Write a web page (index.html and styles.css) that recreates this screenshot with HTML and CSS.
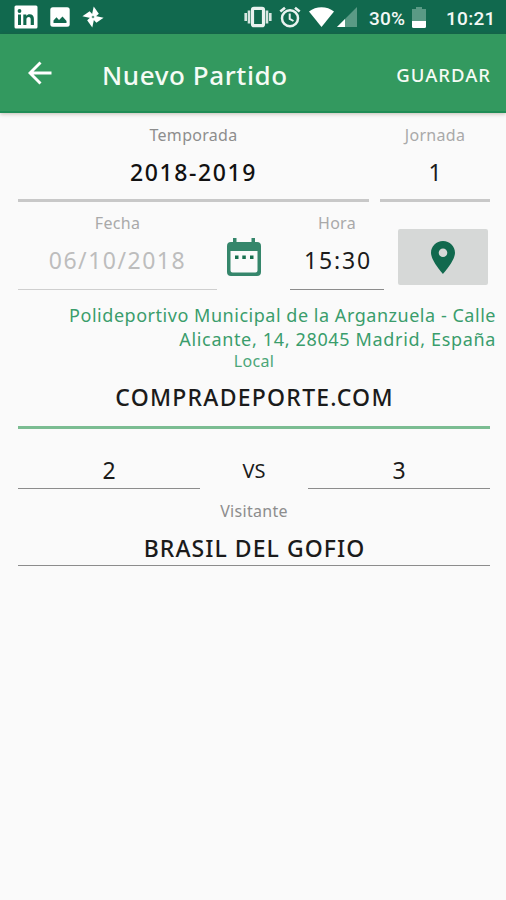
FILE: index.html
```html
<!DOCTYPE html>
<html lang="es">
<head>
  <meta charset="UTF-8">
  <meta name="viewport" content="width=device-width, initial-scale=1.0">
  <title>Nuevo Partido</title>
  <link rel="stylesheet" href="styles.css">
</head>
<body>
  <!-- Barra de estado -->
  <div class="status-bar">
    <svg class="ic-linkedin" width="24" height="24" viewBox="0 0 24 24">
      <rect x="0.5" y="0.5" width="23" height="23" rx="1.5" fill="#fff"/>
      <path d="M4 9.5h3V20H4zM9.300 9.500h3v1.400c.8-1.200 1.900-1.700 3.300-1.700 2.900 0 4.300 1.700 4.300 4.700V20h-3.200v-5.500c0-1.600-.6-2.500-1.900-2.500-1.500 0-2.400 1-2.400 2.700V20H9.300z" fill="#11694e"/>
      <circle cx="5.500" cy="6" r="1.900" fill="#11694e"/>
    </svg>
    <svg class="ic-image" width="20" height="20" viewBox="0 0 20 20">
      <rect x="0.300" y="0.300" width="19.400" height="19.400" rx="2.500" fill="#fff"/>
      <path d="M3.500 16v-2.500l3-3.200 2.500 2.700 3.500-3.500 4 4.500v2z" fill="#11694e"/>
    </svg>
    <svg class="ic-pinwheel" width="22" height="22" viewBox="0 0 22 22">
      <g transform="rotate(12 11 11)" fill="#fff">
        <path id="blade" d="M9.500 11V.5L16 6.500l-3.500 5z"/>
        <use href="#blade" transform="rotate(90 11 11)"/>
        <use href="#blade" transform="rotate(180 11 11)"/>
        <use href="#blade" transform="rotate(270 11 11)"/>
      </g>
      <circle cx="11" cy="11" r="1.300" fill="#5f9b88"/>
    </svg>
    <svg class="ic-vibrate" width="28" height="22" viewBox="0 0 28 22">
      <path d="M1.700 7v8M5 4.500v13M26.300 7v8M23 4.500v13" stroke="#d7e6e1" stroke-width="2.600" fill="none"/>
      <rect x="8.500" y="2.300" width="11" height="17.400" rx="1.500" stroke="#e9f2ef" stroke-width="3.200" fill="none"/>
    </svg>
    <svg class="ic-alarm" width="22" height="22" viewBox="0 0 22 22" fill="none" stroke="#e9f2ef">
      <circle cx="11" cy="12.200" r="8" stroke-width="2.500"/>
      <path d="M1.300 5.600L6 1.700M20.700 5.600L16 1.700" stroke-width="2.600"/>
      <path d="M10.700 7.500v5.300l3.800 2.200" stroke-width="2"/>
    </svg>
    <svg class="ic-wifi" width="25" height="20" viewBox="0 0 25 20">
      <path d="M0 4.500C7-1.300 18-1.300 25 4.500L12.500 20z" fill="#fff"/>
    </svg>
    <svg class="ic-signal" width="20" height="20" viewBox="0 0 20 20">
      <path d="M0 20L20 0v20z" fill="#5a9a85"/>
      <path d="M0 20l8-8v8z" fill="#fff"/>
    </svg>
    <span class="battery-text">30%</span>
    <svg class="ic-battery" width="14" height="21" viewBox="0 0 14 21">
      <path d="M4 0h6v2h4v12H0V2h4z" fill="#5a9a85"/>
      <path d="M0 14h14v5.500q0 1.500-1.500 1.500h-11Q0 21 0 19.500z" fill="#fff"/>
    </svg>
    <span class="clock">10:21</span>
  </div>

  <!-- Cabecera -->
  <header class="app-bar">
    <svg class="back" width="24" height="24" viewBox="0 0 24 24">
      <path d="M23.500 12H2.500M12.500 1.500L2 12l10.500 10.500" fill="none" stroke="#fff" stroke-width="2.900"/>
    </svg>
    <h1>Nuevo Partido</h1>
    <button class="save">GUARDAR</button>
  </header>

  <!-- Formulario -->
  <main class="form">
    <div class="row">
      <div class="field season thick">
        <label>Temporada</label>
        <div class="value medium">2018-2019</div>
      </div>
      <div class="field round thick">
        <label class="light">Jornada</label>
        <div class="value">1</div>
      </div>
    </div>

    <div class="row">
      <div class="field date">
        <label class="light">Fecha</label>
        <div class="value">06/10/2018</div>
      </div>
      <svg class="calendar" width="34" height="38" viewBox="0 0 34 38">
        <path d="M4 4h26q4 0 4 4v26q0 4-4 4H4q-4 0-4-4V8q0-4 4-4zM3.500 13v19.500q0 2 2 2h23q2 0 2-2V13z" fill="#35866b" fill-rule="evenodd"/>
        <path d="M6 0h3.500v5H6zM24.500 0H28v5h-3.500z" fill="#35866b"/>
        <path d="M8 17.500h3.500V21H8zM15.300 17.500h3.500V21h-3.500zM23 17.500h3.500V21H23z" fill="#16704f"/>
      </svg>
      <div class="field time">
        <label class="light">Hora</label>
        <div class="value">15:30</div>
      </div>
      <button class="map-button">
        <svg width="24" height="33" viewBox="0 0 24 33">
          <path d="M12 0C5.200 0 0 5.200 0 11.700 0 20 12 33 12 33s12-13 12-21.300C24 5.200 18.800 0 12 0zm0 7.400a4.300 4.300 0 1 1 0 8.600 4.300 4.300 0 0 1 0-8.600z" fill="#11694e"/>
        </svg>
      </button>
    </div>

    <p class="address">Polideportivo Municipal de la Arganzuela - Calle<br><span class="city">Alicante, 14, 28045 Madrid, España</span></p>

    <div class="field local">
      <label>Local</label>
      <div class="value medium">COMPRADEPORTE.COM</div>
    </div>

    <div class="score">
      <div class="goals">2</div>
      <span class="vs">VS</span>
      <div class="goals">3</div>
    </div>

    <div class="field visitor">
      <label>Visitante</label>
      <div class="value medium">BRASIL DEL GOFIO</div>
    </div>
  </main>
</body>
</html>
```

FILE: styles.css
```css
* {
  box-sizing: border-box;
}
body {
  margin: 0;
  min-height: 900px;
  background: #fafafa;
  color: #1b1b1b;
  font-family: "Noto Sans", "Open Sans", sans-serif;
}
svg {
  display: block;
  flex: none;
}
.status-bar {
  display: flex;
  align-items: center;
  height: 34px;
  padding-left: 14px;
  background: #11694e;
  color: #f3f8f6;
  font-family: Roboto, sans-serif;
  font-size: 19px;
  font-weight: 500;
}
.ic-image {
  margin-left: 12px;
}
.ic-pinwheel {
  margin-left: 12px;
}
.ic-vibrate {
  margin-left: 140px;
}
.ic-alarm {
  margin-left: 7px;
}
.ic-wifi {
  margin-left: 8px;
}
.ic-signal {
  margin-left: 3px;
}
.battery-text {
  width: 38px;
  margin-left: 12px;
  margin-top: 2px;
  letter-spacing: 0.2px;
}
.ic-battery {
  margin-left: 5px;
}
.clock {
  margin-left: 20px;
  margin-top: 2px;
  letter-spacing: 0.3px;
}
.app-bar {
  display: flex;
  align-items: center;
  height: 79px;
  padding: 0 15px 0 28px;
  background: #33995f;
  border-bottom: 2px solid #1f8d56;
  box-shadow: 0 1px 4px rgba(70, 50, 20, 0.3);
  color: #f5fbf5;
}
.app-bar h1 {
  margin: 4px 0 0 50px;
  font-size: 26px;
  font-weight: 500;
  letter-spacing: 0.6px;
}
.save {
  margin-left: auto;
  padding: 3px 0 0;
  border: none;
  background: none;
  color: inherit;
  font: 500 18.5px "Noto Sans", sans-serif;
  letter-spacing: 1px;
}
.form {
  padding: 11px 16px 0 18px;
}
.row {
  display: flex;
}
.field {
  text-align: center;
  border-bottom: 1px solid #8c8c8c;
}
.field label {
  display: block;
  height: 22px;
  color: #8d8d8d;
  font-size: 16px;
  line-height: 22px;
  letter-spacing: 0.3px;
}
.field label.light {
  color: #a9a9a9;
}
.value {
  height: 30px;
  margin-top: 11px;
  font-size: 23px;
  line-height: 30px;
}
.medium {
  font-weight: 500;
}
.thick {
  height: 78px;
  border-bottom: 3px solid #c8c8c8;
}
.season {
  width: 351px;
}
.season .value {
  color: #111;
  letter-spacing: 1.6px;
}
.round {
  width: 110px;
  margin-left: 11px;
}
.date,
.time {
  height: 78px;
  margin-top: 10px;
}
.date {
  width: 199px;
  border-color: #cfcfcf;
}
.date .value {
  color: #bdbdbd;
  letter-spacing: 1.5px;
}
.calendar {
  margin: 36px 0 0 10px;
}
.time {
  width: 94px;
  margin-left: 29px;
}
.time .value {
  padding-left: 2px;
  letter-spacing: 1.8px;
}
.map-button {
  display: flex;
  align-items: center;
  justify-content: center;
  width: 90px;
  height: 56px;
  margin: 27px 0 0 14px;
  padding: 0;
  border: none;
  border-radius: 2px;
  background: #d6d8d7;
}
.address {
  margin: 14px -6px 0 0;
  color: #3a9d6c;
  font-size: 18px;
  line-height: 23.5px;
  letter-spacing: 0.53px;
  text-align: right;
  white-space: nowrap;
}
.city {
  letter-spacing: 0.66px;
}
.local {
  width: 472px;
  height: 78px;
  border-bottom: 3px solid #7bbd92;
}
.local label {
  height: 20px;
  color: #4ba678;
  line-height: 20px;
}
.local .value {
  padding-left: 1px;
  letter-spacing: 1.25px;
}
.score {
  display: flex;
  align-items: flex-start;
  justify-content: space-between;
  width: 472px;
  margin-top: 26px;
  font-size: 23px;
  line-height: 30px;
  text-align: center;
}
.goals {
  width: 182px;
  height: 34px;
  border-bottom: 1px solid #8c8c8c;
}
.vs {
  padding-top: 1px;
  font-size: 20px;
}
.visitor {
  width: 472px;
  height: 66px;
  margin-top: 11px;
}
.visitor .value {
  padding-left: 1px;
  letter-spacing: 1.05px;
}
```
